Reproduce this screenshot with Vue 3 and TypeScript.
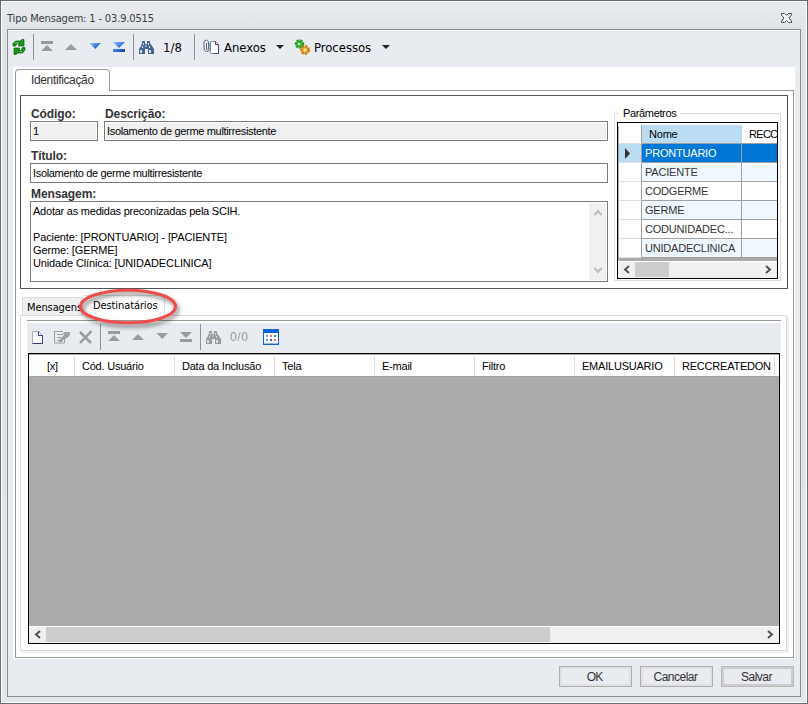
<script setup lang="ts">
interface Column { label: string; width: number }

const columns: Column[] = [
  { label: '[x]', width: 45 },
  { label: 'Cód. Usuário', width: 100 },
  { label: 'Data da Inclusão', width: 100 },
  { label: 'Tela', width: 100 },
  { label: 'E-mail', width: 100 },
  { label: 'Filtro', width: 100 },
  { label: 'EMAILUSUARIO', width: 100 },
  { label: 'RECCREATEDON', width: 100 },
]
const params: string[] = ['PRONTUARIO', 'PACIENTE', 'CODGERME', 'GERME', 'CODUNIDADEC...', 'UNIDADECLINICA']
const message = `Adotar as medidas preconizadas pela SCIH.

Paciente: [PRONTUARIO] - [PACIENTE]
Germe: [GERME]
Unidade Clínica: [UNIDADECLINICA]`
</script>

<template>
  <div class="window">
    <svg class="defs" width="0" height="0">
      <defs>
        <linearGradient id="blue" x1="0" y1="0" x2="1" y2="1">
          <stop offset="0" stop-color="#8fc4ff" /><stop offset=".5" stop-color="#3c7ae8" /><stop offset="1" stop-color="#1239b0" />
        </linearGradient>
        <symbol id="first" viewBox="0 0 16 16"><path d="M2 2h12v3H2zM8 6l6 6H2z" /></symbol>
        <symbol id="up" viewBox="0 0 16 16"><path d="M8 5l6 6H2z" /></symbol>
        <symbol id="down" viewBox="0 0 16 16"><path d="M2.500 4h11.500L8.250 10z" /></symbol>
        <symbol id="last" viewBox="0 0 16 16"><path d="M2 3h12L8 9zM2 10h12v3H2z" /></symbol>
        <symbol id="bino" viewBox="0 0 16 16">
          <path d="M4 2h3v3h2V2h3v2l2 3 2 3v5h-6v-5H7v5H1v-5l2-3 1-3z" />
          <path class="shine" d="M2 11h2v3H2zM11 11h2v3h-2zM5 4h1v2H5zM10 4h1v2h-1zM4 7h1v2H4zM11 7h1v2h-1zM7.500 6h1v2h-1z" />
        </symbol>
      </defs>
    </svg>

    <header class="titlebar">
      <span class="title">Tipo Mensagem: 1 - 03.9.0515</span>
      <svg class="close" width="11" height="10" viewBox="0 0 11 10">
        <path d="M.5.5h3L5.500 2.500 7.500.5h3v1.500L8 5l2.500 3v1.500h-3L5.500 7.500 3.500 9.500h-3V8L3 5 .5 2z" fill="#fff" stroke="#4a4d55" />
      </svg>
    </header>

    <main class="body">
      <div class="toolbar main-tools">
        <svg width="16" height="16" viewBox="0 0 16 16">
          <path d="M3 7V4.500L5.500 2H10l2-1.500h2V7H8.500V5.500L10 4.500H7L5.500 7z" fill="#17961c" stroke="#07600d" stroke-width=".7" />
          <path d="M15 8.500V11l-2.500 3H8l-2 1.500H4V9h5.500v1.500L8 11.500h3l1.500-3z" fill="#17961c" stroke="#07600d" stroke-width=".7" />
          <path d="M5 3.800h4M9.500 12.500H12" stroke="#7fe070" stroke-width=".8" />
        </svg>
        <i class="sep"></i>
        <svg class="off" width="16" height="16"><use href="#first" /></svg>
        <svg class="off" width="16" height="16"><use href="#up" /></svg>
        <svg class="on" width="16" height="16"><use href="#down" /></svg>
        <svg class="on" width="16" height="16"><use href="#last" /></svg>
        <i class="sep"></i>
        <svg class="bino" width="16" height="16"><use href="#bino" /></svg>
        <span class="count">1/8</span>
        <i class="sep"></i>
        <svg width="17" height="16" viewBox="0 0 17 16">
          <path d="M7.500 2.500h5l3 3v9h-8z" fill="#fbfcff" stroke="#8e93ad" />
          <path d="M12.500 2.500v3h3v9h-5" fill="none" stroke="#5a3f8f" />
          <path d="M3.500 4v6q1 2 2 0V2.500q-2-3-4.500 0V10q2 4.500 6 1V4" fill="none" stroke="#5c6f86" />
        </svg>
        <span class="anexos">Anexos</span>
        <svg class="caret" width="8" height="16"><path d="M0 6h8L4 10z" /></svg>
        <svg width="17" height="16" viewBox="0 0 17 16">
          <circle cx="5.500" cy="5" r="3.600" fill="#35b435" stroke="#2a9a2a" stroke-width="2.400" stroke-dasharray="2.400 1" />
          <circle cx="5" cy="5" r="1.300" fill="#c8f0b8" />
          <circle cx="11" cy="11" r="3.700" fill="#f0aa28" stroke="#c8871c" stroke-width="2.600" stroke-dasharray="2.400 1" />
          <circle cx="11" cy="11" r="1.400" fill="#ffe9a8" />
        </svg>
        <span class="processos">Processos</span>
        <svg class="caret" width="8" height="16"><path d="M0 6h8L4 10z" /></svg>
      </div>

      <section class="page">
        <div class="tab-main"><span>Identificação</span></div>
        <div class="sheet">
          <div class="box">
            <div class="form">
              <div class="line">
                <label class="code"><b>Código:</b><span class="field ro"><em>1</em></span></label>
                <label class="desc"><b>Descrição:</b><span class="field ro"><em>Isolamento de germe multirresistente</em></span></label>
              </div>
              <label class="titulo"><b>Título:</b><span class="field"><em>Isolamento de germe multirresistente</em></span></label>
              <label class="msg"><b>Mensagem:</b>
                <span class="area">
                  <span class="text">{{ message }}</span>
                  <span class="vscroll">
                    <svg width="10" height="7"><path d="M1.500 6L5 2l3.500 4" /></svg>
                    <svg width="10" height="7"><path d="M1.500 1L5 5l3.500-4" /></svg>
                  </span>
                </span>
              </label>
            </div>
            <fieldset class="params">
              <legend>Parâmetros</legend>
              <div class="pgrid">
                <div class="prow phead"><i></i><span>Nome</span><span class="rec">RECC</span></div>
                <div v-for="(p, i) in params" :key="p" class="prow" :class="{ sel: i === 0, alt: i % 2 === 1 }">
                  <i><svg v-if="i === 0" width="7" height="11"><path d="M1 0l5 5.500L1 11z" fill="#333" /></svg></i><span>{{ p }}</span><span></span>
                </div>
                <div class="hscroll small">
                  <svg width="8" height="9"><path d="M6 1L2 4.500 6 8" /></svg>
                  <span class="thumb"></span>
                  <svg class="end" width="8" height="9"><path d="M2 1l4 3.500L2 8" /></svg>
                </div>
              </div>
            </fieldset>
          </div>

          <div class="tabs">
            <span class="tab"><em>Mensagens</em></span>
            <span class="tab active"><em>Destinatários</em>
              <svg class="ring" width="112" height="50" viewBox="0 0 112 50">
                <ellipse cx="56" cy="22.500" rx="47.500" ry="16.300" />
              </svg>
            </span>
          </div>
          <div class="subpage">
            <div class="toolbar sub-tools">
              <svg width="16" height="16" viewBox="0 0 16 16">
                <path d="M2.500 2.500h6l4 4v8h-10z" fill="#fbfcff" stroke="#a6abc4" />
                <path d="M8.500 2.500v4h4v8h-10" fill="none" stroke="#343b78" />
              </svg>
              <svg width="17" height="16" viewBox="0 0 17 16">
                <path d="M0 2.500h9M.5 2v12h10V9M3 5.500h6M3 8.500h4M3 11.500h3" fill="none" stroke="#9c9c9c" />
                <path d="M9 4l2-1h5v3l-3 3-4 2-1 2H5v-2l5-5z" fill="#a0a0a0" />
              </svg>
              <svg width="16" height="16" viewBox="0 0 16 16"><path d="M2 3l11 11M13.500 2L2 14" fill="none" stroke="#999" stroke-width="2.500" /></svg>
              <i class="sep"></i>
              <svg class="off" width="16" height="16"><use href="#first" /></svg>
              <svg class="off" width="16" height="16"><use href="#up" /></svg>
              <svg class="off" width="16" height="16"><use href="#down" /></svg>
              <svg class="off" width="16" height="16"><use href="#last" /></svg>
              <i class="sep"></i>
              <svg class="off bino-off" width="16" height="16"><use href="#bino" /></svg>
              <span class="count0">0/0</span>
              <svg width="16" height="16" viewBox="0 0 16 16">
                <rect x=".5" y=".5" width="15" height="15" fill="#fff" stroke="#1265c8" />
                <path d="M0 0h16v4H0z" fill="#0d62cf" /><path d="M1 14h14v1H1z" fill="#8abef5" />
                <path d="M3 6h2v2H3zM3 10h2v2H3z" fill="#75a7dd" /><path d="M7 6h2v2H7zM11 10h2v2h-2z" fill="#e37152" />
                <path d="M11 6h2v2h-2z" fill="#3d9a4c" /><path d="M7 10h2v2H7z" fill="#3e59c8" />
              </svg>
            </div>
            <div class="grid">
              <div class="ghead">
                <span v-for="c in columns" :key="c.label" :style="{ width: c.width + 'px' }"><em>{{ c.label }}</em></span>
              </div>
              <div class="gbody"></div>
              <div class="hscroll">
                <svg width="8" height="9"><path d="M6 1L2 4.500 6 8" /></svg>
                <span class="thumb"></span>
                <svg class="end" width="8" height="9"><path d="M2 1l4 3.500L2 8" /></svg>
              </div>
            </div>
          </div>
        </div>
      </section>

      <footer class="actions">
        <button class="ok">OK</button>
        <button class="cancel">Cancelar</button>
        <button class="save">Salvar</button>
      </footer>
    </main>
  </div>
</template>

<style>
body { overflow: hidden; }
</style>

<style scoped>
.window, .window * { box-sizing: border-box; }
.window {
  width: 808px; height: 704px; border: 1px solid #686d77; padding: 1px 6px 7px;
  box-shadow: inset 0 0 0 1px #fff; background: linear-gradient(#ebecf0, #e0e4e6 28px, #e2e5e9);
  font: 11px/13px "Liberation Sans", Arial, sans-serif; color: #000;
}
.defs { display: block; height: 0; }
svg { display: block; flex: none; }
em, i { font-style: normal; }
em { white-space: pre; }
.titlebar { height: 27px; display: flex; justify-content: space-between; padding: 10px 9px 0 0; color: #373c44; }
.title, .anexos, .processos, .count, .tab { font-family: "DejaVu Sans Condensed", "DejaVu Sans", sans-serif; font-stretch: condensed; }
.title { font-size: 11px; letter-spacing: -.15px; white-space: nowrap; }
.close { margin-top: 1px; }
.body { height: 668px; border: 1px solid #888c94; border-top-color: #8b918e; box-shadow: inset 0 1px #fff; background: #e8ebf0; padding: 0 5px; }

.toolbar { display: grid; align-items: center; }
.toolbar > span { white-space: nowrap; }
.main-tools { height: 37px; padding: 0 0 3px; margin-left: -3px; grid-template-columns: 23px 6px 24px 24px 24px 22px 5px 25px 31px 9px 21px 52px 18px 20px 68px 8px; }
.sep { width: 1px; height: 26px; background: #8d9095; }
.off { fill: #9b9b9b; }
.on { fill: url(#blue); }
.bino { fill: #46648f; }
.shine { fill: #cfe0f5; }
.caret { fill: #222; }
.count, .anexos, .processos { font-size: 13px; }
.anexos, .processos { letter-spacing: -.05px; }

.page { height: 592px; background: #fff; padding: 2px 1px 1px 2px; }
.tab-main { position: relative; z-index: 1; width: 95px; height: 22px; margin-bottom: -1px; border: 1px solid #9a9a9a; border-bottom: 0; border-radius: 4px 4px 0 0; background: #fff; padding: 4px 0 0 15px; color: #333; font-size: 12px; letter-spacing: -.36px; }
.sheet { height: 568px; border: 1px solid #979797; padding: 4px; }
.box { height: 194px; width: 768px; border: 1px solid #555; display: flex; padding: 11px 6px 6px 9px; }
.form { width: 578px; }
.line { display: flex; gap: 6px; }
label { display: block; }
label b { display: block; color: #333; font-size: 12px; line-height: 14px; padding-left: 1px; letter-spacing: -.1px; }
.code { width: 68px; }
.desc { width: 504px; }
.field { display: block; height: 20px; border: 1px solid #7a7a7a; padding: 3px 2px; background: #fff; letter-spacing: -.33px; }
.ro { background: #f0f0f0; box-shadow: inset 0 0 0 1px #fff; }
.titulo { margin-top: 8px; }
.msg { margin-top: 4px; }
.area { display: flex; justify-content: space-between; height: 81px; border: 1px solid #7a7a7a; padding: 1px; }
.text { white-space: pre; padding: 2px 0 0 1px; letter-spacing: -.13px; }
.text::first-line { letter-spacing: -.23px; }
.vscroll { width: 17px; background: #f0f0f0; display: flex; flex-direction: column; justify-content: space-between; align-items: center; padding: 6px 0; }
.vscroll path { fill: none; stroke: #bcbcbc; stroke-width: 2; }

.params { margin: 0 0 0 6px; padding: 0 2px; border: 1px solid #dcdcdc; width: 167px; height: 174px; min-width: 0; }
legend { padding: 0 4px; margin-left: 2px; white-space: nowrap; letter-spacing: -.35px; }
.pgrid { width: 161px; height: 157px; margin-top: 2px; border: 1px solid #000; padding: 2px 0 0 1px; overflow: hidden; background: linear-gradient(#fff 3px, #ababab 3px); }
.prow { display: grid; grid-template-columns: 23px 100px 38px; height: 19px; background: #fff; font-size: 11px; line-height: 19px; color: #333; letter-spacing: -.2px; }
.prow i { border-right: 1px solid #a0a0a0; border-bottom: 1px solid #e0e0e0; }
.prow span { border-right: 1px solid #a0a0a0; border-bottom: 1px solid #a0a0a0; padding-left: 3px; white-space: nowrap; overflow: hidden; }
.phead span { padding-left: 7px; color: #000; border-right: 0; line-height: 18px; }
.phead .rec { letter-spacing: -.7px; }
.phead span:nth-child(2) { background: #bcdcf4; }
.alt span { background: #f0f8ff; }
.sel span { background: #0078d7; color: #fff; }
.sel i { background: #bcdcf4; padding: 4px 0 0 5px; }

.hscroll { display: flex; align-items: flex-start; height: 17px; background: #f0f0f0; border-top: 1px solid #fff; padding: 0 5px; }
.hscroll svg { margin-top: 3px; }
.hscroll path { fill: none; stroke: #505050; stroke-width: 2; }
.hscroll .thumb { width: 504px; height: 15px; background: #cdcdcd; margin-left: 4px; }
.hscroll .end { margin-left: auto; }
.small { margin: 3px 0 0 -1px; }
.small .thumb { width: 34px; }

.tabs { display: flex; align-items: flex-end; height: 26px; padding-left: 2px; }
.tab { height: 18px; width: 61px; background: #f0f0f0; border: 1px solid #dcdcdc; border-bottom: 0; padding: 3px 0 0 4px; font-size: 11px; letter-spacing: -.1px; }
.active { position: relative; z-index: 2; width: 82px; height: 21px; background: #fff; padding: 3px 0 0 10px; margin-bottom: -1px; border-left: 0; }
.ring { position: absolute; left: -11px; top: -12px; overflow: visible; }
.ring ellipse { fill: none; stroke: #f04c4c; stroke-width: 3; filter: drop-shadow(2px 3px 2px rgba(0, 0, 0, .5)); }
.subpage { width: 767px; height: 336px; border: 1px solid #dcdcdc; box-shadow: 2px 2px 0 #f0f0f0; padding: 4px 5px 0 6px; }
.sub-tools { border-top: 1px solid #999; box-shadow: inset 0 2px #fff; height: 33px; background: #e8ebf0; padding-left: 3px; grid-template-columns: 24px 24px 22px 6px 24px 24px 24px 22px 5px 25px 33px 16px; }
.count0 { font-size: 12px; color: #999; letter-spacing: .6px; }
.bino-off .shine { fill: #c8c8c8; }
.grid { width: 752px; height: 291px; border: 1px solid #000; margin-left: 1px; background: #ababab; overflow: hidden; }
.ghead { display: flex; height: 23px; background: #fff; border-top: 1px solid #ababab; border-bottom: 1px solid #a0a0a0; overflow: hidden; padding-left: 1px; letter-spacing: -.22px; }
.ghead span { flex: none; border-right: 1px solid #e0e0e0; margin-top: 1px; padding: 4px 0 0 7px; }
.ghead span:first-child { padding-left: 17px; }
.gbody { height: 249px; }

.actions { display: flex; justify-content: flex-end; gap: 8px; padding: 7px 1px 0 0; }
button { width: 73px; height: 21px; border: 1px solid #adadad; background: #e8ebf0; box-shadow: inset 0 0 0 2px #e1e1e1; font: 12px/13px "Liberation Sans", Arial, sans-serif; letter-spacing: -.5px; color: #333; padding: 1px 2px 0 0; }
.ok { letter-spacing: -.8px; }
.save { box-shadow: inset 0 0 0 2px #ccc; border-color: #bbb; }
</style>
